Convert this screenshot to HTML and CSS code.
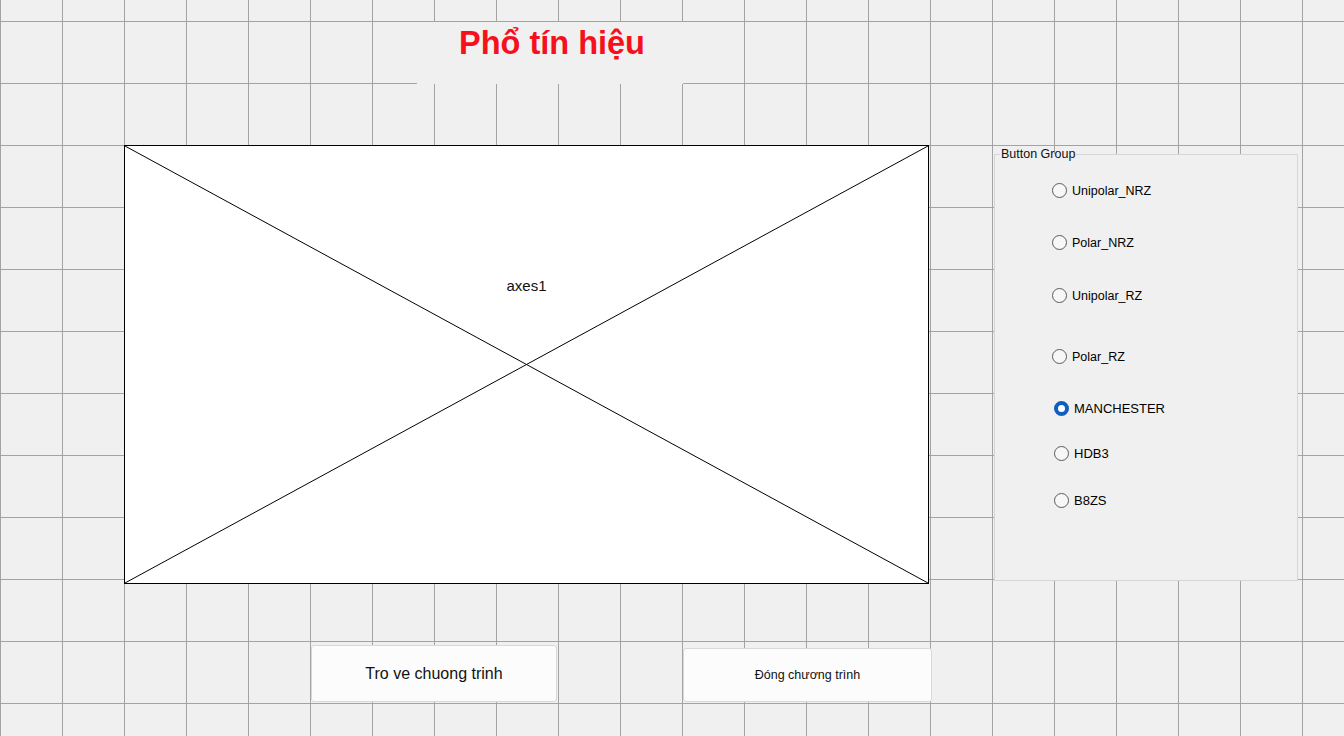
FILE: index.html
```html
<!DOCTYPE html>
<html>
<head>
<meta charset="utf-8">
<link rel="stylesheet" href="styles.css">
</head>
<body>
<div class="canvas">
  <div class="title-box"><span class="title">Phổ tín hiệu</span></div>

  <div class="axes">
    <svg class="cross" width="803" height="437" viewBox="0 0 803 437" preserveAspectRatio="none">
      <line x1="0" y1="0" x2="803" y2="437" stroke="#000" stroke-width="1"/>
      <line x1="0" y1="437" x2="803" y2="0" stroke="#000" stroke-width="1"/>
    </svg>
    <span class="axes-label">axes1</span>
  </div>

  <fieldset class="group">
    <legend class="group-title">Button Group</legend>
    <label class="opt o1"><span class="radio"></span><span class="lbl">Unipolar_NRZ</span></label>
    <label class="opt o2"><span class="radio"></span><span class="lbl">Polar_NRZ</span></label>
    <label class="opt o3"><span class="radio"></span><span class="lbl">Unipolar_RZ</span></label>
    <label class="opt o4"><span class="radio"></span><span class="lbl">Polar_RZ</span></label>
    <label class="opt o5 big"><span class="radio on"></span><span class="lbl">MANCHESTER</span></label>
    <label class="opt o6 big"><span class="radio"></span><span class="lbl">HDB3</span></label>
    <label class="opt o7 big"><span class="radio"></span><span class="lbl">B8ZS</span></label>
  </fieldset>

  <div class="btn btn-back">Tro ve chuong trinh</div>
  <div class="btn btn-close">Đóng chương trình</div>
</div>
</body>
</html>
```

FILE: styles.css
```css
html, body {
  margin: 0;
  padding: 0;
}
body {
  width: 1344px;
  height: 736px;
  overflow: hidden;
  font-family: "Liberation Sans", Arial, sans-serif;
  background-color: #f0f0f0;
  background-image:
    linear-gradient(to right, #a3a3a3 0, #a3a3a3 1px, transparent 1px),
    linear-gradient(to bottom, #a3a3a3 0, #a3a3a3 1px, transparent 1px);
  background-size: 62px 62px;
  background-position: 0 21px;
}
.canvas {
  position: relative;
  width: 1344px;
  height: 736px;
}
.title-box {
  position: absolute;
  left: 417px;
  top: 22px;
  width: 266px;
  height: 62px;
  box-sizing: border-box;
  padding-left: 4px;
  background: #f0f0f0;
  display: flex;
  justify-content: center;
}
.title {
  color: #f5101c;
  font-weight: bold;
  font-size: 32.5px;
  line-height: 1;
  margin-top: 5px;
}
.axes {
  position: absolute;
  left: 124px;
  top: 145px;
  width: 805px;
  height: 439px;
  box-sizing: border-box;
  background: #fff;
  border: 1px solid #000;
}
.cross {
  position: absolute;
  left: 0;
  top: 0;
  display: block;
}
.axes-label {
  position: absolute;
  left: 0;
  right: 0;
  top: 131px;
  text-align: center;
  font-size: 15px;
  color: #111;
}
.group {
  position: absolute;
  left: 994px;
  top: 147px;
  width: 304px;
  height: 434px;
  margin: 0;
  padding: 0;
  box-sizing: border-box;
  border: 1px solid #d6d6d6;
  background: #f0f0f0;
}
.group-title {
  font-size: 12.5px;
  color: #111;
  padding: 0 1px;
  margin-left: 5px;
  line-height: 14px;
}
.opt {
  position: absolute;
  display: flex;
  align-items: center;
  gap: 5px;
  font-size: 12.5px;
  color: #000;
}
.opt.big { font-size: 13px; }
.radio {
  width: 15px;
  height: 15px;
  border: 1px solid #5a5a5a;
  border-radius: 50%;
  background: #f7f7f7;
  box-sizing: border-box;
}
.radio.on {
  border: 4px solid #0f5fbf;
  background: #fff;
}
.o1 { left: 57px; top: 22px; }
.o2 { left: 57px; top: 74px; }
.o3 { left: 57px; top: 127px; }
.o4 { left: 57px; top: 188px; }
.o5 { left: 59px; top: 240px; }
.o6 { left: 59px; top: 285px; }
.o7 { left: 59px; top: 332px; }
.btn {
  position: absolute;
  box-sizing: border-box;
  background: #fcfcfc;
  border: 1px solid #d9d9d9;
  border-radius: 3px;
  display: flex;
  align-items: center;
  justify-content: center;
  color: #111;
}
.btn-back {
  left: 311px;
  top: 645px;
  width: 246px;
  height: 57px;
  font-size: 16px;
}
.btn-close {
  left: 683px;
  top: 648px;
  width: 249px;
  height: 54px;
  font-size: 12.5px;
}
```
